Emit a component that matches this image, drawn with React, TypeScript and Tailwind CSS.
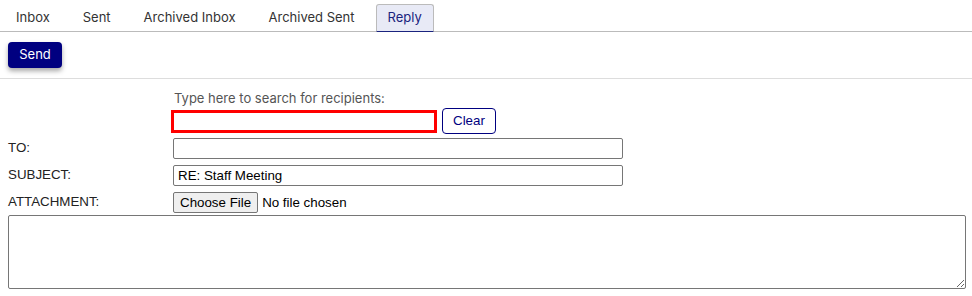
import { useState } from 'react';

const TABS = ['Inbox', 'Sent', 'Archived Inbox', 'Archived Sent', 'Reply'];

export default function App() {
  const [active, setActive] = useState('Reply');
  const [search, setSearch] = useState('');
  const [subject, setSubject] = useState('RE: Staff Meeting');

  return (
    <div className="font-['Liberation_Sans',Arial,sans-serif] text-[13px] text-[#222] bg-white">
      {/* Tabs */}
      <nav className="flex items-end h-[32px] border-b border-[#bbb] pl-1 gap-[9px] font-['Inter',sans-serif] text-[13px]">
        {TABS.map((tab) => (
          <button
            key={tab}
            onClick={() => setActive(tab)}
            className={
              tab === active
                ? 'h-[28px] -mb-px px-[11px] border border-[#bbb] border-b-[#1a237e] rounded-t-[3px] bg-[#e8eaf6] text-[#1a237e]'
                : 'h-[27px] px-3 text-[#333]'
            }
          >
            {tab}
          </button>
        ))}
      </nav>

      {/* Toolbar */}
      <div className="px-2 pt-[10px] pb-[10px] border-b border-[#ddd]">
        <button className="h-[26px] w-[54px] rounded-[4px] bg-[#000080] text-white font-['Inter',sans-serif] text-[13px] shadow-[0_3px_5px_rgba(0,0,0,0.35)]">
          Send
        </button>
      </div>

      {/* Form */}
      <div className="pl-2 pt-[12px]">
        <div className="pl-[166px] text-[#555] font-['Inter',sans-serif] leading-[15px]">
          Type here to search for recipients:
        </div>
        <div className="flex items-center mt-[2px] pl-[163px]">
          <input
            value={search}
            onChange={(e) => setSearch(e.target.value)}
            className="w-[266px] h-[23px] border-[3px] border-[#f00] outline-none px-1 text-[13px]"
          />
          <button
            onClick={() => setSearch('')}
            className="ml-[5px] h-[26px] px-[10px] border border-[#000080] rounded-[4px] text-[#000080] text-[13.33px]"
          >
            Clear
          </button>
        </div>

        <div className="flex items-center mt-[4px] text-[13.33px]">
          <label className="w-[165px] pb-[2px]">TO:</label>
          <input className="w-[450px] h-[21px] border border-[#767676] rounded-[2px] px-[3px] outline-none" />
        </div>

        <div className="flex items-center mt-[5px] text-[13.33px]">
          <label className="w-[165px] pb-[2px]">SUBJECT:</label>
          <input
            value={subject}
            onChange={(e) => setSubject(e.target.value)}
            className="w-[450px] h-[21px] border border-[#767676] rounded-[2px] px-[4px] text-black outline-none"
          />
        </div>

        <div className="flex items-center mt-[5px] text-[13.33px]">
          <label className="w-[165px] pb-[2px]">ATTACHMENT:</label>
          <input
            type="file"
            className="text-black file:h-[21px] file:px-[6px] file:mr-[4px] file:border file:border-[#767676] file:rounded-[2px] file:bg-[#efefef] file:text-black"
          />
        </div>

        <textarea className="block mt-[1px] w-[958px] h-[74px] border border-[#767676] rounded-[2px] p-[2px] text-[13px] outline-none" />
      </div>
    </div>
  );
}
